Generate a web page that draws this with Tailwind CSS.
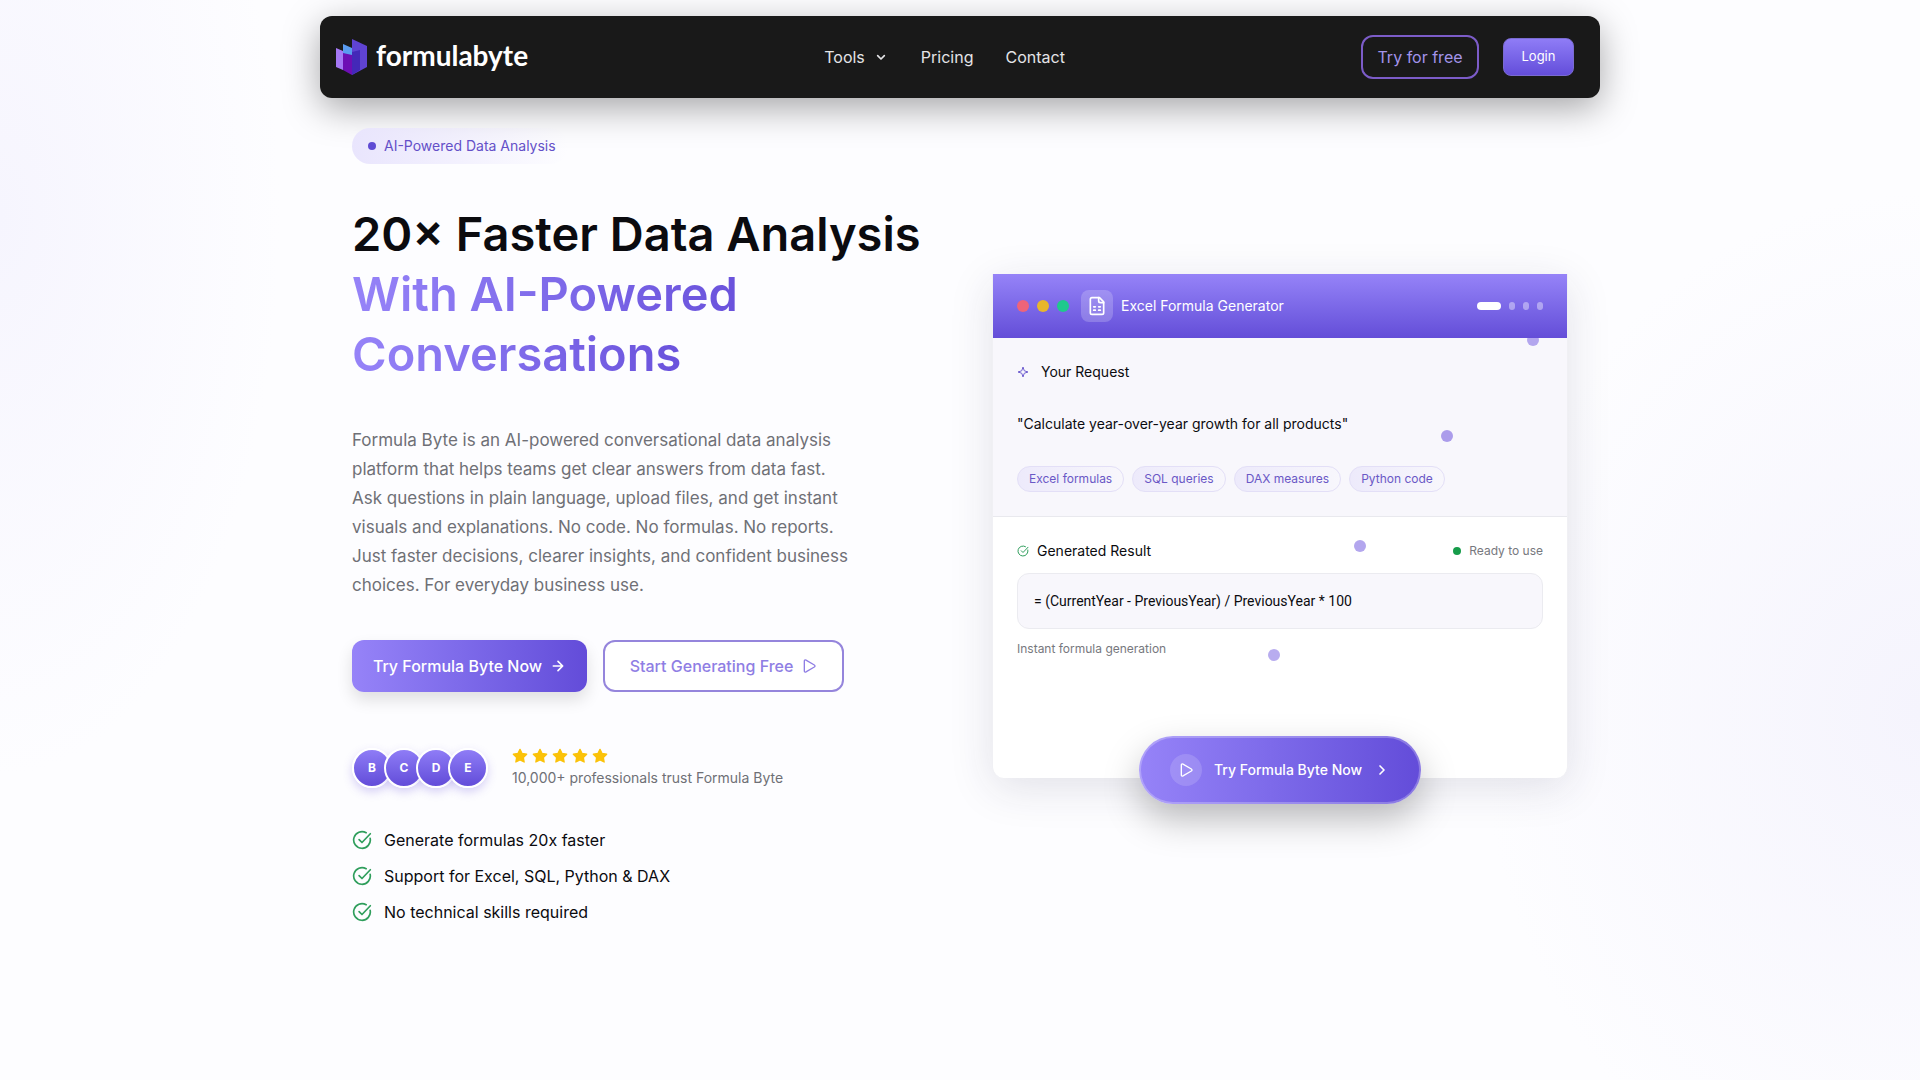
<!DOCTYPE html>
<html lang="en">
<head>
  <meta charset="UTF-8" />
  <meta name="viewport" content="width=device-width, initial-scale=1.0" />
  <title>Formula Byte</title>
  <script src="https://cdn.jsdelivr.net/npm/@tailwindcss/browser@4"></script>
</head>
<body class="min-h-screen bg-[#fdfdff] bg-[radial-gradient(ellipse_280px_560px_at_0%_20%,#f6f5fe,transparent),radial-gradient(ellipse_440px_520px_at_100%_66%,#f5f4fd,transparent)] bg-no-repeat font-[Inter,sans-serif] text-[#0b0b0f]">

  <!-- Header -->
  <header class="mx-auto max-w-7xl pt-4">
    <div class="flex h-[82px] items-center justify-between rounded-xl bg-[#191919] pl-4 pr-[26px] shadow-[0_10px_36px_rgba(0,0,0,0.35)]">
      <a href="#" class="flex items-center gap-2 text-white">
        <svg class="h-[38px] w-8" viewBox="0 0 32 38">
          <path d="M0 10l7 3v19L0 29z" fill="#a578f5" />
          <path d="M7 6l9 4v9L7 16z" fill="#5a9cf0" />
          <path d="M16 1l15 7v21l-15 8z" fill="#5f43d2" />
          <path d="M16 14l8-2v20l-8 5z" fill="#4428b8" />
          <path d="M7 15l9 2v20l-9-5z" fill="#6d0fb4" />
        </svg>
        <span class="mb-1 font-[Lato,sans-serif] text-[28px] leading-9 font-bold">formulabyte</span>
      </a>
      <nav class="flex items-center gap-8 text-base text-[#e4e4e7]">
        <button class="flex items-center gap-2">Tools
          <svg class="size-4" viewBox="0 0 24 24" fill="none" stroke="currentColor" stroke-width="2.5" stroke-linecap="round" stroke-linejoin="round"><path d="m7 10 5 5 5-5" /></svg>
        </button>
        <a href="#">Pricing</a>
        <a href="#">Contact</a>
      </nav>
      <div class="flex items-center gap-6">
        <button class="h-11 w-[118px] rounded-xl border-2 border-[#7c5cc8] text-base text-[#a394ea]">Try for free</button>
        <button class="h-[38px] w-[71px] rounded-lg border border-[#7a6bd0] bg-linear-to-b from-[#8f7cf6] to-[#644dda] text-[13px] text-white">Login</button>
      </div>
    </div>
  </header>

  <!-- Hero -->
  <main class="mx-auto grid max-w-7xl grid-cols-2 items-center gap-16 px-8 pt-[30px]">
    <section>
      <div class="flex h-9 w-[216px] items-center gap-2 rounded-full bg-linear-to-r from-[#e9e5fd] to-transparent pl-4 text-sm text-[#6450c8]">
        <span class="size-2 shrink-0 rounded-full bg-[#5f4bd4]"></span>
        <span class="whitespace-nowrap">AI-Powered Data Analysis</span>
      </div>

      <h1 class="mt-10 text-[47px] leading-[60px] font-semibold whitespace-nowrap">
        20× Faster Data Analysis<br />
        <span class="bg-linear-to-r from-[#9683f8] to-[#6a52dc] box-decoration-clone bg-clip-text text-transparent">With AI-Powered<br />Conversations</span>
      </h1>

      <p class="mt-[42px] text-[17px] leading-[29px] whitespace-nowrap text-[#6f7076]">
        Formula Byte is an AI-powered conversational data analysis<br />
        platform that helps teams get clear answers from data fast.<br />
        Ask questions in plain language, upload files, and get instant<br />
        visuals and explanations. No code. No formulas. No reports.<br />
        Just faster decisions, clearer insights, and confident business<br />
        choices. For everyday business use.
      </p>

      <div class="mt-10 flex gap-4 text-base font-medium">
        <button class="flex h-[52px] w-[235px] items-center justify-center gap-2 rounded-xl bg-linear-to-r from-[#9683f8] to-[#634cd9] whitespace-nowrap text-white shadow-[0_8px_16px_rgba(0,0,0,0.12)]">Try Formula Byte Now
          <svg class="size-4" viewBox="0 0 24 24" fill="none" stroke="currentColor" stroke-width="2.5" stroke-linecap="round" stroke-linejoin="round"><path d="M5 12h14M12 5l7 7-7 7" /></svg>
        </button>
        <button class="flex h-[52px] w-[241px] items-center justify-center gap-2 rounded-xl border-2 border-[#9585dc] bg-white whitespace-nowrap text-[#8f7ee4]">Start Generating Free
          <svg class="size-4" viewBox="0 0 24 24" fill="none" stroke="currentColor" stroke-width="2" stroke-linejoin="round"><path d="M5 4.500c0-1.500 1-2 2.500-1.200l12.500 7.200c1.300.8 1.300 2.200 0 3l-12.500 7.200c-1.500.8-2.500.3-2.500-1.200z" /></svg>
        </button>
      </div>

      <div class="mt-14 flex h-10 items-center gap-6">
        <div class="flex -space-x-2 text-xs font-bold text-white">
          <span class="flex size-10 items-center justify-center rounded-full border-2 border-white bg-linear-to-b from-[#8f7cf6] to-[#634cd9] shadow-[0_4px_10px_rgba(100,77,218,0.25)]">B</span>
          <span class="flex size-10 items-center justify-center rounded-full border-2 border-white bg-linear-to-b from-[#8f7cf6] to-[#634cd9] shadow-[0_4px_10px_rgba(100,77,218,0.25)]">C</span>
          <span class="flex size-10 items-center justify-center rounded-full border-2 border-white bg-linear-to-b from-[#8f7cf6] to-[#634cd9] shadow-[0_4px_10px_rgba(100,77,218,0.25)]">D</span>
          <span class="flex size-10 items-center justify-center rounded-full border-2 border-white bg-linear-to-b from-[#8f7cf6] to-[#634cd9] shadow-[0_4px_10px_rgba(100,77,218,0.25)]">E</span>
        </div>
        <div>
          <div class="flex gap-1 text-[#fbc209]">
            <svg class="size-4" viewBox="0 0 24 24" fill="currentColor" stroke="currentColor" stroke-width="2" stroke-linejoin="round"><path d="m12 2 3.100 6.300 6.900 1-5 4.900 1.200 6.800-6.200-3.200L5.800 21 7 14.200 2 9.300l6.900-1z" /></svg>
            <svg class="size-4" viewBox="0 0 24 24" fill="currentColor" stroke="currentColor" stroke-width="2" stroke-linejoin="round"><path d="m12 2 3.100 6.300 6.900 1-5 4.900 1.200 6.800-6.200-3.200L5.800 21 7 14.200 2 9.300l6.900-1z" /></svg>
            <svg class="size-4" viewBox="0 0 24 24" fill="currentColor" stroke="currentColor" stroke-width="2" stroke-linejoin="round"><path d="m12 2 3.100 6.300 6.900 1-5 4.900 1.200 6.800-6.200-3.200L5.800 21 7 14.200 2 9.300l6.900-1z" /></svg>
            <svg class="size-4" viewBox="0 0 24 24" fill="currentColor" stroke="currentColor" stroke-width="2" stroke-linejoin="round"><path d="m12 2 3.100 6.300 6.900 1-5 4.900 1.200 6.800-6.200-3.200L5.800 21 7 14.200 2 9.300l6.900-1z" /></svg>
            <svg class="size-4" viewBox="0 0 24 24" fill="currentColor" stroke="currentColor" stroke-width="2" stroke-linejoin="round"><path d="m12 2 3.100 6.300 6.900 1-5 4.900 1.200 6.800-6.200-3.200L5.800 21 7 14.200 2 9.300l6.900-1z" /></svg>
          </div>
          <p class="mt-1 text-sm text-[#6f7076]">10,000+ professionals trust Formula Byte</p>
        </div>
      </div>

      <ul class="mt-10 space-y-3 text-base">
        <li class="flex items-center gap-3">
          <svg class="size-5 text-[#2f9e5c]" viewBox="0 0 24 24" fill="none" stroke="currentColor" stroke-width="2" stroke-linecap="round" stroke-linejoin="round"><path d="M21.800 10A10 10 0 1 1 17 3.300" /><path d="m8.500 11.500 3.500 3.500L22 4.500" /></svg>
          Generate formulas 20x faster
        </li>
        <li class="flex items-center gap-3">
          <svg class="size-5 text-[#2f9e5c]" viewBox="0 0 24 24" fill="none" stroke="currentColor" stroke-width="2" stroke-linecap="round" stroke-linejoin="round"><path d="M21.800 10A10 10 0 1 1 17 3.300" /><path d="m8.500 11.500 3.500 3.500L22 4.500" /></svg>
          Support for Excel, SQL, Python &amp; DAX
        </li>
        <li class="flex items-center gap-3">
          <svg class="size-5 text-[#2f9e5c]" viewBox="0 0 24 24" fill="none" stroke="currentColor" stroke-width="2" stroke-linecap="round" stroke-linejoin="round"><path d="M21.800 10A10 10 0 1 1 17 3.300" /><path d="m8.500 11.500 3.500 3.500L22 4.500" /></svg>
          No technical skills required
        </li>
      </ul>
    </section>

    <!-- Demo card -->
    <section class="relative">
      <div class="rounded-b-xl border-x border-[#f0f0f4] bg-white pb-[121px] shadow-[0_10px_44px_rgba(40,40,80,0.13)]">
        <div class="relative z-10 flex h-16 items-center bg-linear-to-b from-[#9683f8] to-[#644dd8] px-6 text-white">
          <div class="flex gap-2">
            <span class="size-3 rounded-full bg-[#ee6479]"></span>
            <span class="size-3 rounded-full bg-[#e8b62c]"></span>
            <span class="size-3 rounded-full bg-[#1fc98c]"></span>
          </div>
          <span class="ml-3 flex size-8 items-center justify-center rounded-lg bg-white/20">
            <svg class="size-5" viewBox="0 0 24 24" fill="none" stroke="currentColor" stroke-width="2" stroke-linecap="round" stroke-linejoin="round"><path d="M15 2H6a2 2 0 0 0-2 2v16a2 2 0 0 0 2 2h12a2 2 0 0 0 2-2V7z" /><path d="M14 2v4a2 2 0 0 0 2 2h4M8 13h2M14 13h2M8 17h2M14 17h2" /></svg>
          </span>
          <h2 class="ml-2 text-sm">Excel Formula Generator</h2>
          <div class="ml-auto flex gap-2">
            <span class="h-2 w-6 rounded-full bg-white"></span>
            <span class="h-2 w-1.5 rounded-full bg-white/40"></span>
            <span class="h-2 w-1.5 rounded-full bg-white/40"></span>
            <span class="h-2 w-1.5 rounded-full bg-white/40"></span>
          </div>
        </div>

        <div class="border-b border-[#e9e9ee] bg-[#f8f7fc] px-6 pt-6 pb-6">
          <div class="flex items-center gap-3 text-sm">
            <svg class="size-3 text-[#7160d0]" viewBox="0 0 24 24" fill="none" stroke="currentColor" stroke-width="2" stroke-linejoin="round"><path d="M12 2l2.500 7.500L22 12l-7.500 2.500L12 22l-2.500-7.500L2 12l7.500-2.500z" /></svg>
            <h3>Your Request</h3>
          </div>
          <p class="mt-8 text-sm">"Calculate year-over-year growth for all products"</p>
          <div class="mt-8 flex gap-2 text-xs text-[#6a58c6]">
            <span class="flex h-[26px] items-center rounded-full border border-[#e3dff7] bg-linear-to-r from-[#edeafb] to-[#f8f7fc] px-[11px]">Excel formulas</span>
            <span class="flex h-[26px] items-center rounded-full border border-[#e3dff7] bg-linear-to-r from-[#edeafb] to-[#f8f7fc] px-[11px]">SQL queries</span>
            <span class="flex h-[26px] items-center rounded-full border border-[#e3dff7] bg-linear-to-r from-[#edeafb] to-[#f8f7fc] px-[11px]">DAX measures</span>
            <span class="flex h-[26px] items-center rounded-full border border-[#e3dff7] bg-linear-to-r from-[#edeafb] to-[#f8f7fc] px-[11px]">Python code</span>
          </div>
        </div>

        <div class="px-6 pt-6">
          <div class="flex items-center gap-2 text-sm">
            <svg class="size-3 text-[#2f9e5c]" viewBox="0 0 24 24" fill="none" stroke="currentColor" stroke-width="2" stroke-linecap="round" stroke-linejoin="round"><path d="M21.800 10A10 10 0 1 1 17 3.300" /><path d="m8.500 11.500 3.500 3.500L22 4.500" /></svg>
            <h3>Generated Result</h3>
            <span class="ml-auto size-2 rounded-full bg-[#169c4a]"></span>
            <span class="text-xs text-[#77787e]">Ready to use</span>
          </div>
          <div class="mt-3 rounded-xl border border-[#ebebf0] bg-[#f8f7fc] px-4 py-[17px]">
            <code class="block font-[Roboto,sans-serif] text-sm">= (CurrentYear - PreviousYear) / PreviousYear * 100</code>
          </div>
          <p class="mt-3 text-xs text-[#77787e]">Instant formula generation</p>
        </div>
      </div>

      <!-- Floating dots -->
      <span class="absolute top-[60px] right-[29px] size-3 rounded-full bg-[#b3a6ee]"></span>
      <span class="absolute top-[156px] right-[115px] size-3 rounded-full bg-[#ab9ceb]"></span>
      <span class="absolute top-[266px] right-[202px] size-3 rounded-full bg-[#b3a6ee]"></span>
      <span class="absolute top-[375px] right-[288px] size-3 rounded-full bg-[#b8acef]"></span>

      <button class="absolute -bottom-[26px] left-1/2 flex h-[68px] w-[282px] -translate-x-1/2 items-center justify-center gap-3 rounded-full border-2 border-white/25 bg-linear-to-r from-[#9683f8] to-[#634cd9] bg-origin-border text-sm font-medium whitespace-nowrap text-white shadow-[0_16px_36px_rgba(0,0,0,0.25)]">
        <span class="flex size-8 items-center justify-center rounded-full bg-white/15">
          <svg class="size-4" viewBox="0 0 24 24" fill="none" stroke="currentColor" stroke-width="2" stroke-linejoin="round"><path d="M5 4.500c0-1.500 1-2 2.500-1.200l12.500 7.200c1.300.8 1.300 2.200 0 3l-12.500 7.200c-1.500.8-2.500.3-2.500-1.200z" /></svg>
        </span>
        Try Formula Byte Now
        <svg class="size-4" viewBox="0 0 24 24" fill="none" stroke="currentColor" stroke-width="2.500" stroke-linecap="round" stroke-linejoin="round"><path d="m9 6 6 6-6 6" /></svg>
      </button>
    </section>
  </main>
</body>
</html>
